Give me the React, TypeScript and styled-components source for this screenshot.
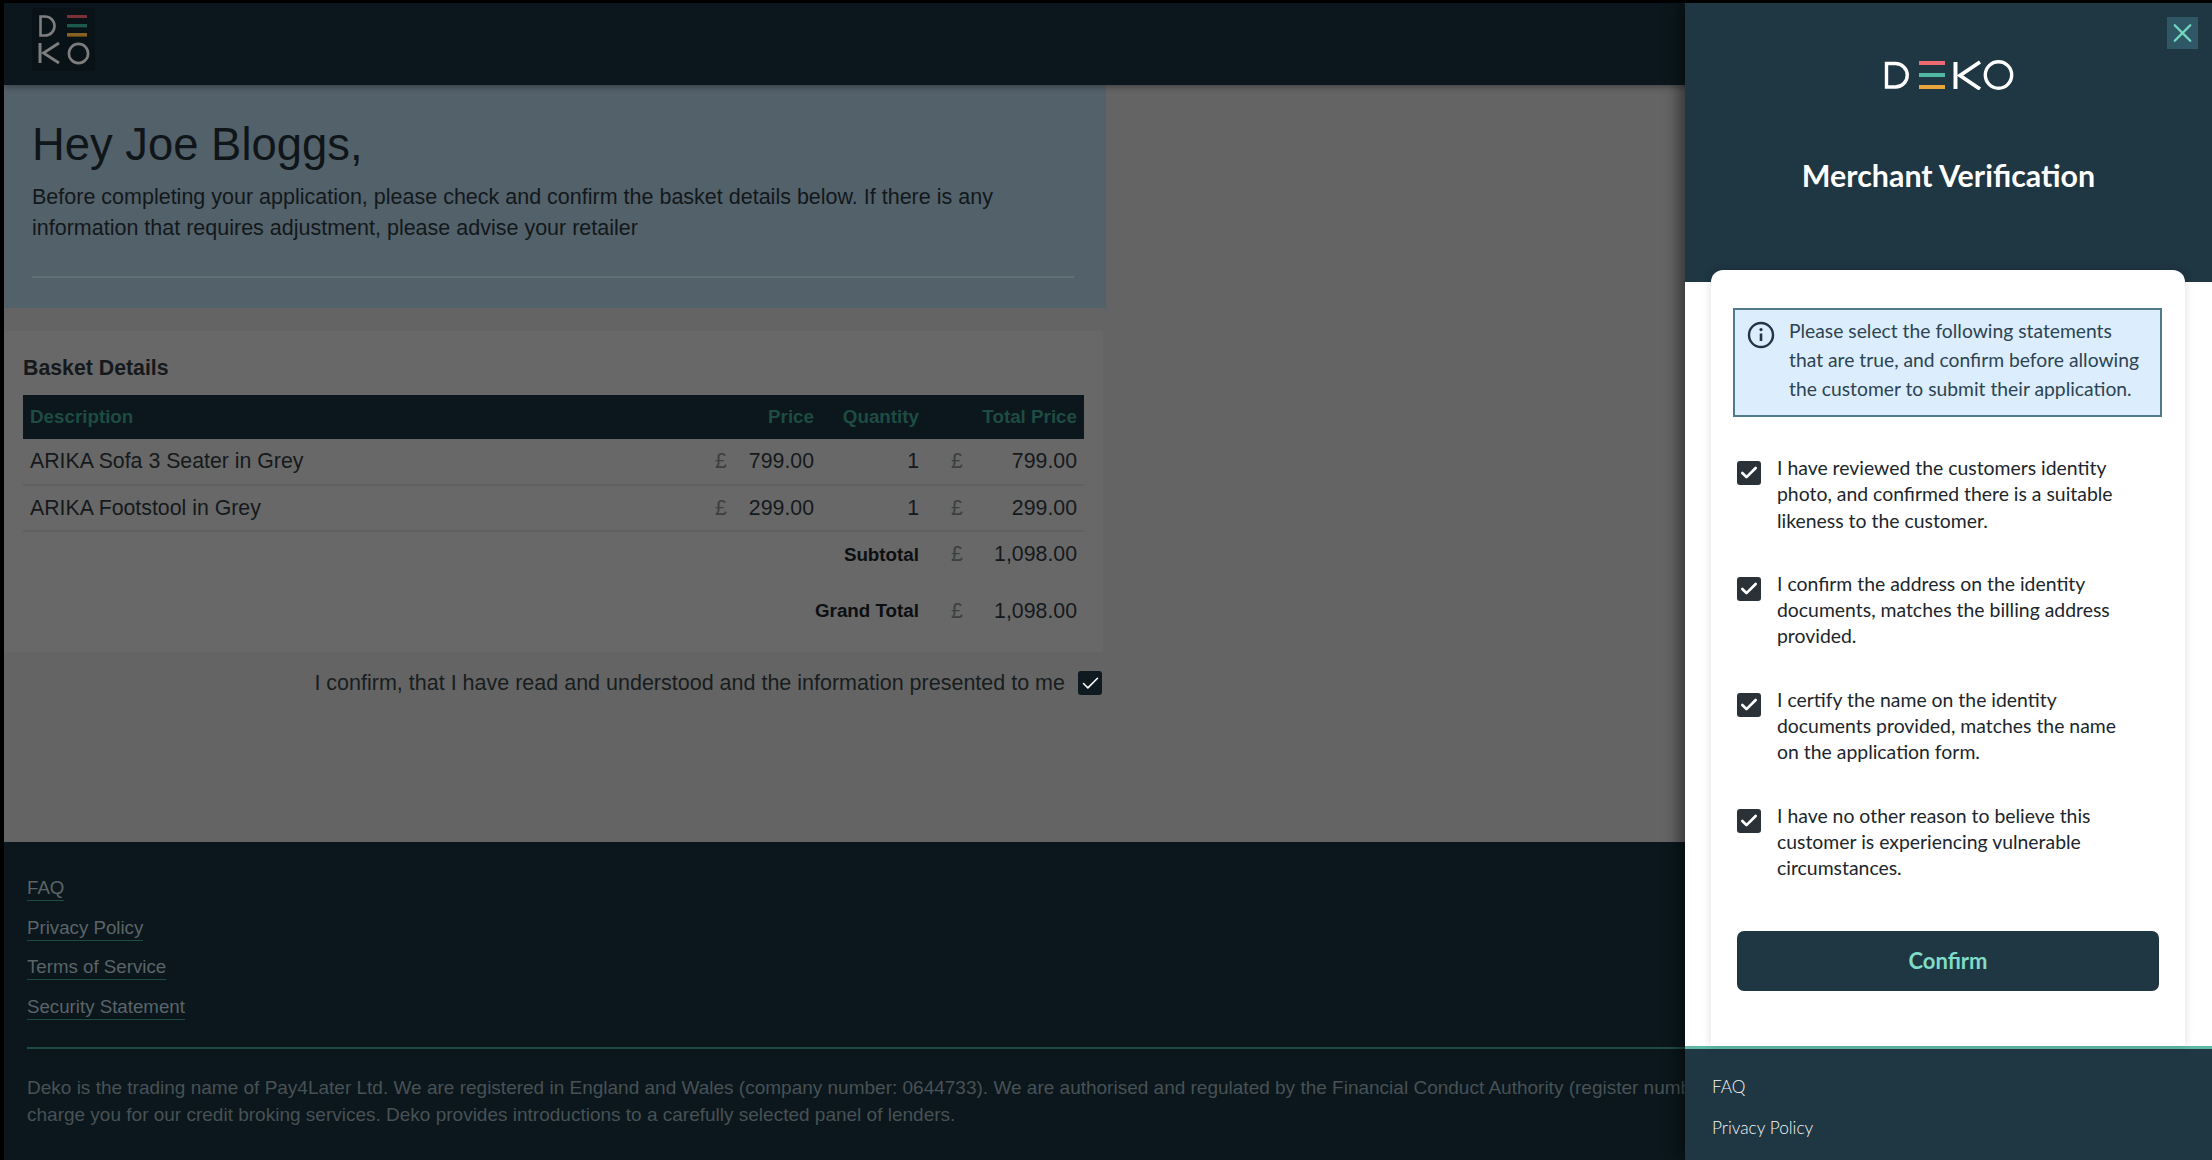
import React from "react";
import styled, { createGlobalStyle } from "styled-components";
import { X, Check } from "lucide-react";

const GlobalStyle = createGlobalStyle`
    * { box-sizing: border-box; }
    html, body { margin: 0; padding: 0; background: #000; }
    body { font-family: "Liberation Sans", Arial, sans-serif; }
`;

const Screen = styled.div`
    position: relative;
    width: 2212px;
    height: 1160px;
    overflow: hidden;
    background: #000;
    padding: 3px 0 0 4px;
    display: flex;
    flex-direction: column;
`;
const Header = styled.header`
    height: 82px;
    flex: none;
    background: #0b171c;
    padding: 5px 0 0 28px;
    box-shadow: 0 2px 6px rgba(0, 0, 0, 0.35);
    position: relative;
`;
const LogoBox = styled.div`
    width: 63px;
    height: 63px;
    background: #091317;
`;
const Main = styled.main`
    flex: 1;
    background: #646464;
`;
const Hero = styled.section`
    width: 1102px;
    height: 223px;
    background: #53616a;
    padding: 32px 32px 0 28px;
`;
const Heading = styled.h1`
    margin: 0 0 9px;
    font-size: 45.4px;
    line-height: 56px;
    font-weight: 400;
    color: #0f1518;
`;
const Intro = styled.p`
    margin: 0;
    font-size: 21.5px;
    line-height: 31px;
    color: #12181b;
    padding-bottom: 32px;
    border-bottom: 2px solid #646e75;
`;
const Basket = styled.section`
    width: 1099px;
    margin-top: 23px;
    padding: 24px 19px 7px;
    background: #686868;
`;
const BasketTitle = styled.h2`
    margin: 0 0 14px;
    font-size: 21.3px;
    line-height: 26px;
    font-weight: 700;
    color: #15191c;
`;
const Table = styled.table`
    width: 1061px;
    border-collapse: collapse;
    table-layout: fixed;
    color: #15191c;
`;
const HeadCell = styled.th<{ $left?: boolean }>`
    height: 44px;
    padding: 0 7px 0 7px;
    background: #0b171c;
    color: #1e4c43;
    font-size: 18.8px;
    font-weight: 700;
    text-align: ${(p) => (p.$left ? "left" : "right")};
`;
const Row = styled.tr<{ $ruled?: boolean }>`
    border-bottom: ${(p) => (p.$ruled ? "2px solid #606060" : "none")};
`;
const Cell = styled.td<{ $h?: number; $bold?: boolean; $left?: boolean }>`
    height: ${(p) => p.$h ?? 46}px;
    padding: 0 7px 0 7px;
    font-weight: ${(p) => (p.$bold ? 700 : 400)};
    font-size: ${(p) => (p.$bold ? "18.8px" : "21.3px")};
    text-align: ${(p) => (p.$left ? "left" : "right")};
    color: ${(p) => (p.$bold ? "#0c0f11" : "#15191c")};
`;
const Money = styled.div<{ $inset?: boolean }>`
    display: flex;
    justify-content: space-between;
    padding-left: 1px;
    margin-left: ${(p) => (p.$inset ? 17 : 0)}px;
`;
const Pound = styled.span`
    color: #3c4043;
`;
const ConfirmLine = styled.label`
    width: 1098px;
    height: 62px;
    display: flex;
    align-items: center;
    justify-content: flex-end;
    gap: 13px;
    font-size: 21.5px;
    color: #181d20;
`;
const Tick = styled.span<{ $size: number; $bg: string }>`
    flex: none;
    width: ${(p) => p.$size}px;
    height: ${(p) => p.$size}px;
    border-radius: 3px;
    background: ${(p) => p.$bg};
    color: #fff;
    display: flex;
    align-items: center;
    justify-content: center;
`;
const Footer = styled.footer`
    flex: none;
    height: 318px;
    background: #0b171c;
    padding: 35px 0 0 23px;
`;
const FooterLinks = styled.nav`
    display: flex;
    flex-direction: column;
    align-items: flex-start;
    gap: 15.6px;
`;
const FooterLink = styled.a`
    font-size: 18.7px;
    line-height: 22px;
    padding-bottom: 1px;
    color: #5b6468;
    border-bottom: 1px solid #1e4c43;
`;
const FooterRule = styled.div`
    height: 2px;
    margin: 27px 0 25px;
    background: #1e4c43;
`;
const Legal = styled.p`
    margin: 0;
    font-size: 19px;
    line-height: 27px;
    color: #485155;
    white-space: nowrap;
`;

const Overlay = styled.aside`
    position: absolute;
    top: 3px;
    right: 0;
    bottom: 0;
    width: 527px;
    display: flex;
    flex-direction: column;
    box-shadow: -6px 0 14px rgba(0, 0, 0, 0.45);
`;
const PanelHead = styled.div`
    position: relative;
    flex: none;
    height: 279px;
    background: #1f3643;
    padding-top: 57px;
    display: flex;
    flex-direction: column;
    align-items: center;
`;
const CloseButton = styled.button`
    position: absolute;
    top: 14px;
    right: 14px;
    width: 31px;
    height: 32px;
    padding: 0;
    border: none;
    background: #2f5766;
    color: #72d8c0;
    display: flex;
    align-items: center;
    justify-content: center;
`;
const PanelTitle = styled.h2`
    margin: 67px 0 0;
    font-family: Lato, sans-serif;
    font-size: 30.4px;
    line-height: 36px;
    font-weight: 700;
    color: #fff;
`;
const PanelBody = styled.div`
    flex: 1;
    min-height: 0;
    background: #fff;
    padding: 0 27px 0 26px;
`;
const Card = styled.div`
    height: calc(100% + 12px);
    margin-top: -12px;
    position: relative;
    background: #fff;
    border-radius: 12px 12px 0 0;
    box-shadow: 0 0 10px rgba(0, 0, 0, 0.14);
    padding: 38px 23px 0 22px;
    font-family: Lato, sans-serif;
`;
const InfoBox = styled.div`
    width: 429px;
    height: 109px;
    margin-bottom: 38px;
    padding: 6px 10px 0 12px;
    background: #dcedfd;
    border: 2px solid #4f7a8c;
    display: flex;
    gap: 14px;
    font-size: 19.3px;
    line-height: 29px;
    color: #2c4452;
    white-space: nowrap;
`;
const InfoIcon = styled.svg`
    flex: none;
    margin-top: 5px;
`;
const Statements = styled.div`
    display: flex;
    flex-direction: column;
    gap: 37px;
    padding-left: 4px;
`;
const Statement = styled.label`
    display: flex;
    gap: 16px;
    font-size: 19.4px;
    line-height: 26.3px;
    color: #1c262c;
    white-space: nowrap;
`;
const StatementTick = styled.div`
    padding-top: 6px;
    flex: none;
`;
const ConfirmButton = styled.button`
    display: block;
    width: 422px;
    height: 60px;
    margin: 49px 0 0 4px;
    border: none;
    border-radius: 7px;
    background: #1f3643;
    color: #7fdcc8;
    font-family: Lato, sans-serif;
    font-size: 22px;
    font-weight: 700;
`;
const PanelFooter = styled.div`
    flex: none;
    height: 114px;
    background: #1f3643;
    border-top: 3px solid #5fb8a6;
    padding: 26px 0 0 27px;
    display: flex;
    flex-direction: column;
    align-items: flex-start;
    gap: 17px;
    font-family: Lato, sans-serif;
`;
const PanelLink = styled.a`
    font-size: 17.3px;
    line-height: 24px;
    font-weight: 300;
    color: #f2f5f6;
`;

const WideLogo = () => (
    <svg width="130" height="30" viewBox="0 0 130 30" fill="none">
        <path d="M2.5 3.5V27H11.5a11.75 11.75 0 0 0 0-23.5Z" stroke="#fff" strokeWidth="3.4" />
        <rect x="35" y="1" width="26" height="4" fill="#ee6a72" />
        <rect x="35" y="13" width="26" height="4" fill="#51b8a3" />
        <rect x="35" y="25" width="26" height="4" fill="#e7a53c" />
        <path d="M71.5 2V29" stroke="#fff" strokeWidth="4" />
        <path d="M96 2L76 15.5L96 29" stroke="#fff" strokeWidth="3.8" />
        <circle cx="114.5" cy="15" r="13.2" stroke="#fff" strokeWidth="3.4" />
    </svg>
);

const StackedLogo = () => (
    <svg width="63" height="63" viewBox="0 0 63 63" fill="none">
        <path d="M8.5 8.5V27.5H13a9.5 9.5 0 0 0 0-19Z" stroke="#7d7d7d" strokeWidth="2.6" />
        <rect x="35" y="7" width="20" height="3" fill="#7a3034" />
        <rect x="35" y="16" width="20" height="3.4" fill="#1d5a4d" />
        <rect x="35" y="25" width="20" height="3.6" fill="#8a6020" />
        <path d="M8 35V55" stroke="#7d7d7d" strokeWidth="3" />
        <path d="M27 35L11.5 45L27 55" stroke="#7d7d7d" strokeWidth="2.8" />
        <circle cx="46.5" cy="45.5" r="9.6" stroke="#7d7d7d" strokeWidth="2.6" />
    </svg>
);

const statements = [
    ["I have reviewed the customers identity", "photo, and confirmed there is a suitable", "likeness to the customer."],
    ["I confirm the address on the identity", "documents, matches the billing address", "provided."],
    ["I certify the name on the identity", "documents provided, matches the name", "on the application form."],
    ["I have no other reason to believe this", "customer is experiencing vulnerable", "circumstances."],
];

const items = [
    { name: "ARIKA Sofa 3 Seater in Grey", price: "799.00", qty: 1 },
    { name: "ARIKA Footstool in Grey", price: "299.00", qty: 1 },
];

function App() {
    return (
        <Screen>
            <GlobalStyle />
            <Header>
                <LogoBox>
                    <StackedLogo />
                </LogoBox>
            </Header>
            <Main>
                <Hero>
                    <Heading>Hey Joe Bloggs,</Heading>
                    <Intro>
                        Before completing your application, please check and confirm the basket details below. If there is any
                        <br />
                        information that requires adjustment, please advise your retailer
                    </Intro>
                </Hero>
                <Basket>
                    <BasketTitle>Basket Details</BasketTitle>
                    <Table>
                        <colgroup>
                            <col />
                            <col width="114" />
                            <col width="105" />
                            <col width="158" />
                        </colgroup>
                        <thead>
                            <tr>
                                <HeadCell $left>Description</HeadCell>
                                <HeadCell>Price</HeadCell>
                                <HeadCell>Quantity</HeadCell>
                                <HeadCell>Total Price</HeadCell>
                            </tr>
                        </thead>
                        <tbody>
                            {items.map((item) => (
                                <Row $ruled key={item.name}>
                                    <Cell $left>{item.name}</Cell>
                                    <Cell>
                                        <Money>
                                            <Pound>£</Pound>
                                            {item.price}
                                        </Money>
                                    </Cell>
                                    <Cell>{item.qty}</Cell>
                                    <Cell>
                                        <Money $inset>
                                            <Pound>£</Pound>
                                            {item.price}
                                        </Money>
                                    </Cell>
                                </Row>
                            ))}
                            <Row>
                                <Cell colSpan={3} $bold>Subtotal</Cell>
                                <Cell>
                                    <Money $inset>
                                        <Pound>£</Pound>
                                        1,098.00
                                    </Money>
                                </Cell>
                            </Row>
                            <Row>
                                <Cell colSpan={3} $bold $h={68}>Grand Total</Cell>
                                <Cell $h={68}>
                                    <Money $inset>
                                        <Pound>£</Pound>
                                        1,098.00
                                    </Money>
                                </Cell>
                            </Row>
                        </tbody>
                    </Table>
                </Basket>
                <ConfirmLine>
                    I confirm, that I have read and understood and the information presented to me
                    <Tick $size={24} $bg="#0e1a20">
                        <Check size={21} strokeWidth={1.8} />
                    </Tick>
                </ConfirmLine>
            </Main>
            <Footer>
                <FooterLinks>
                    <FooterLink>FAQ</FooterLink>
                    <FooterLink>Privacy Policy</FooterLink>
                    <FooterLink>Terms of Service</FooterLink>
                    <FooterLink>Security Statement</FooterLink>
                </FooterLinks>
                <FooterRule />
                <Legal>
                    Deko is the trading name of Pay4Later Ltd. We are registered in England and Wales (company number: 0644733). We are authorised and regulated by the Financial Conduct Authority (register number: 725025).
                    <br />
                    charge you for our credit broking services. Deko provides introductions to a carefully selected panel of lenders.
                </Legal>
            </Footer>
            <Overlay>
                <PanelHead>
                    <CloseButton aria-label="Close">
                        <X size={32} strokeWidth={1.8} />
                    </CloseButton>
                    <WideLogo />
                    <PanelTitle>Merchant Verification</PanelTitle>
                </PanelHead>
                <PanelBody>
                    <Card>
                        <InfoBox>
                            <InfoIcon width="28" height="28" viewBox="0 0 28 28" fill="none">
                                <circle cx="14" cy="14" r="12" stroke="#1f3643" strokeWidth="2.4" />
                                <path d="M14 12.5V20" stroke="#1f3643" strokeWidth="2.6" />
                                <circle cx="14" cy="8.6" r="1.6" fill="#1f3643" />
                            </InfoIcon>
                            <div>
                                Please select the following statements
                                <br />
                                that are true, and confirm before allowing
                                <br />
                                the customer to submit their application.
                            </div>
                        </InfoBox>
                        <Statements>
                            {statements.map((lines) => (
                                <Statement key={lines[0]}>
                                    <StatementTick>
                                        <Tick $size={24} $bg="#2a3238">
                                            <Check size={20} strokeWidth={3.2} />
                                        </Tick>
                                    </StatementTick>
                                    <div>
                                        {lines[0]}
                                        <br />
                                        {lines[1]}
                                        <br />
                                        {lines[2]}
                                    </div>
                                </Statement>
                            ))}
                        </Statements>
                        <ConfirmButton>Confirm</ConfirmButton>
                    </Card>
                </PanelBody>
                <PanelFooter>
                    <PanelLink>FAQ</PanelLink>
                    <PanelLink>Privacy Policy</PanelLink>
                </PanelFooter>
            </Overlay>
        </Screen>
    );
}

export default App;
